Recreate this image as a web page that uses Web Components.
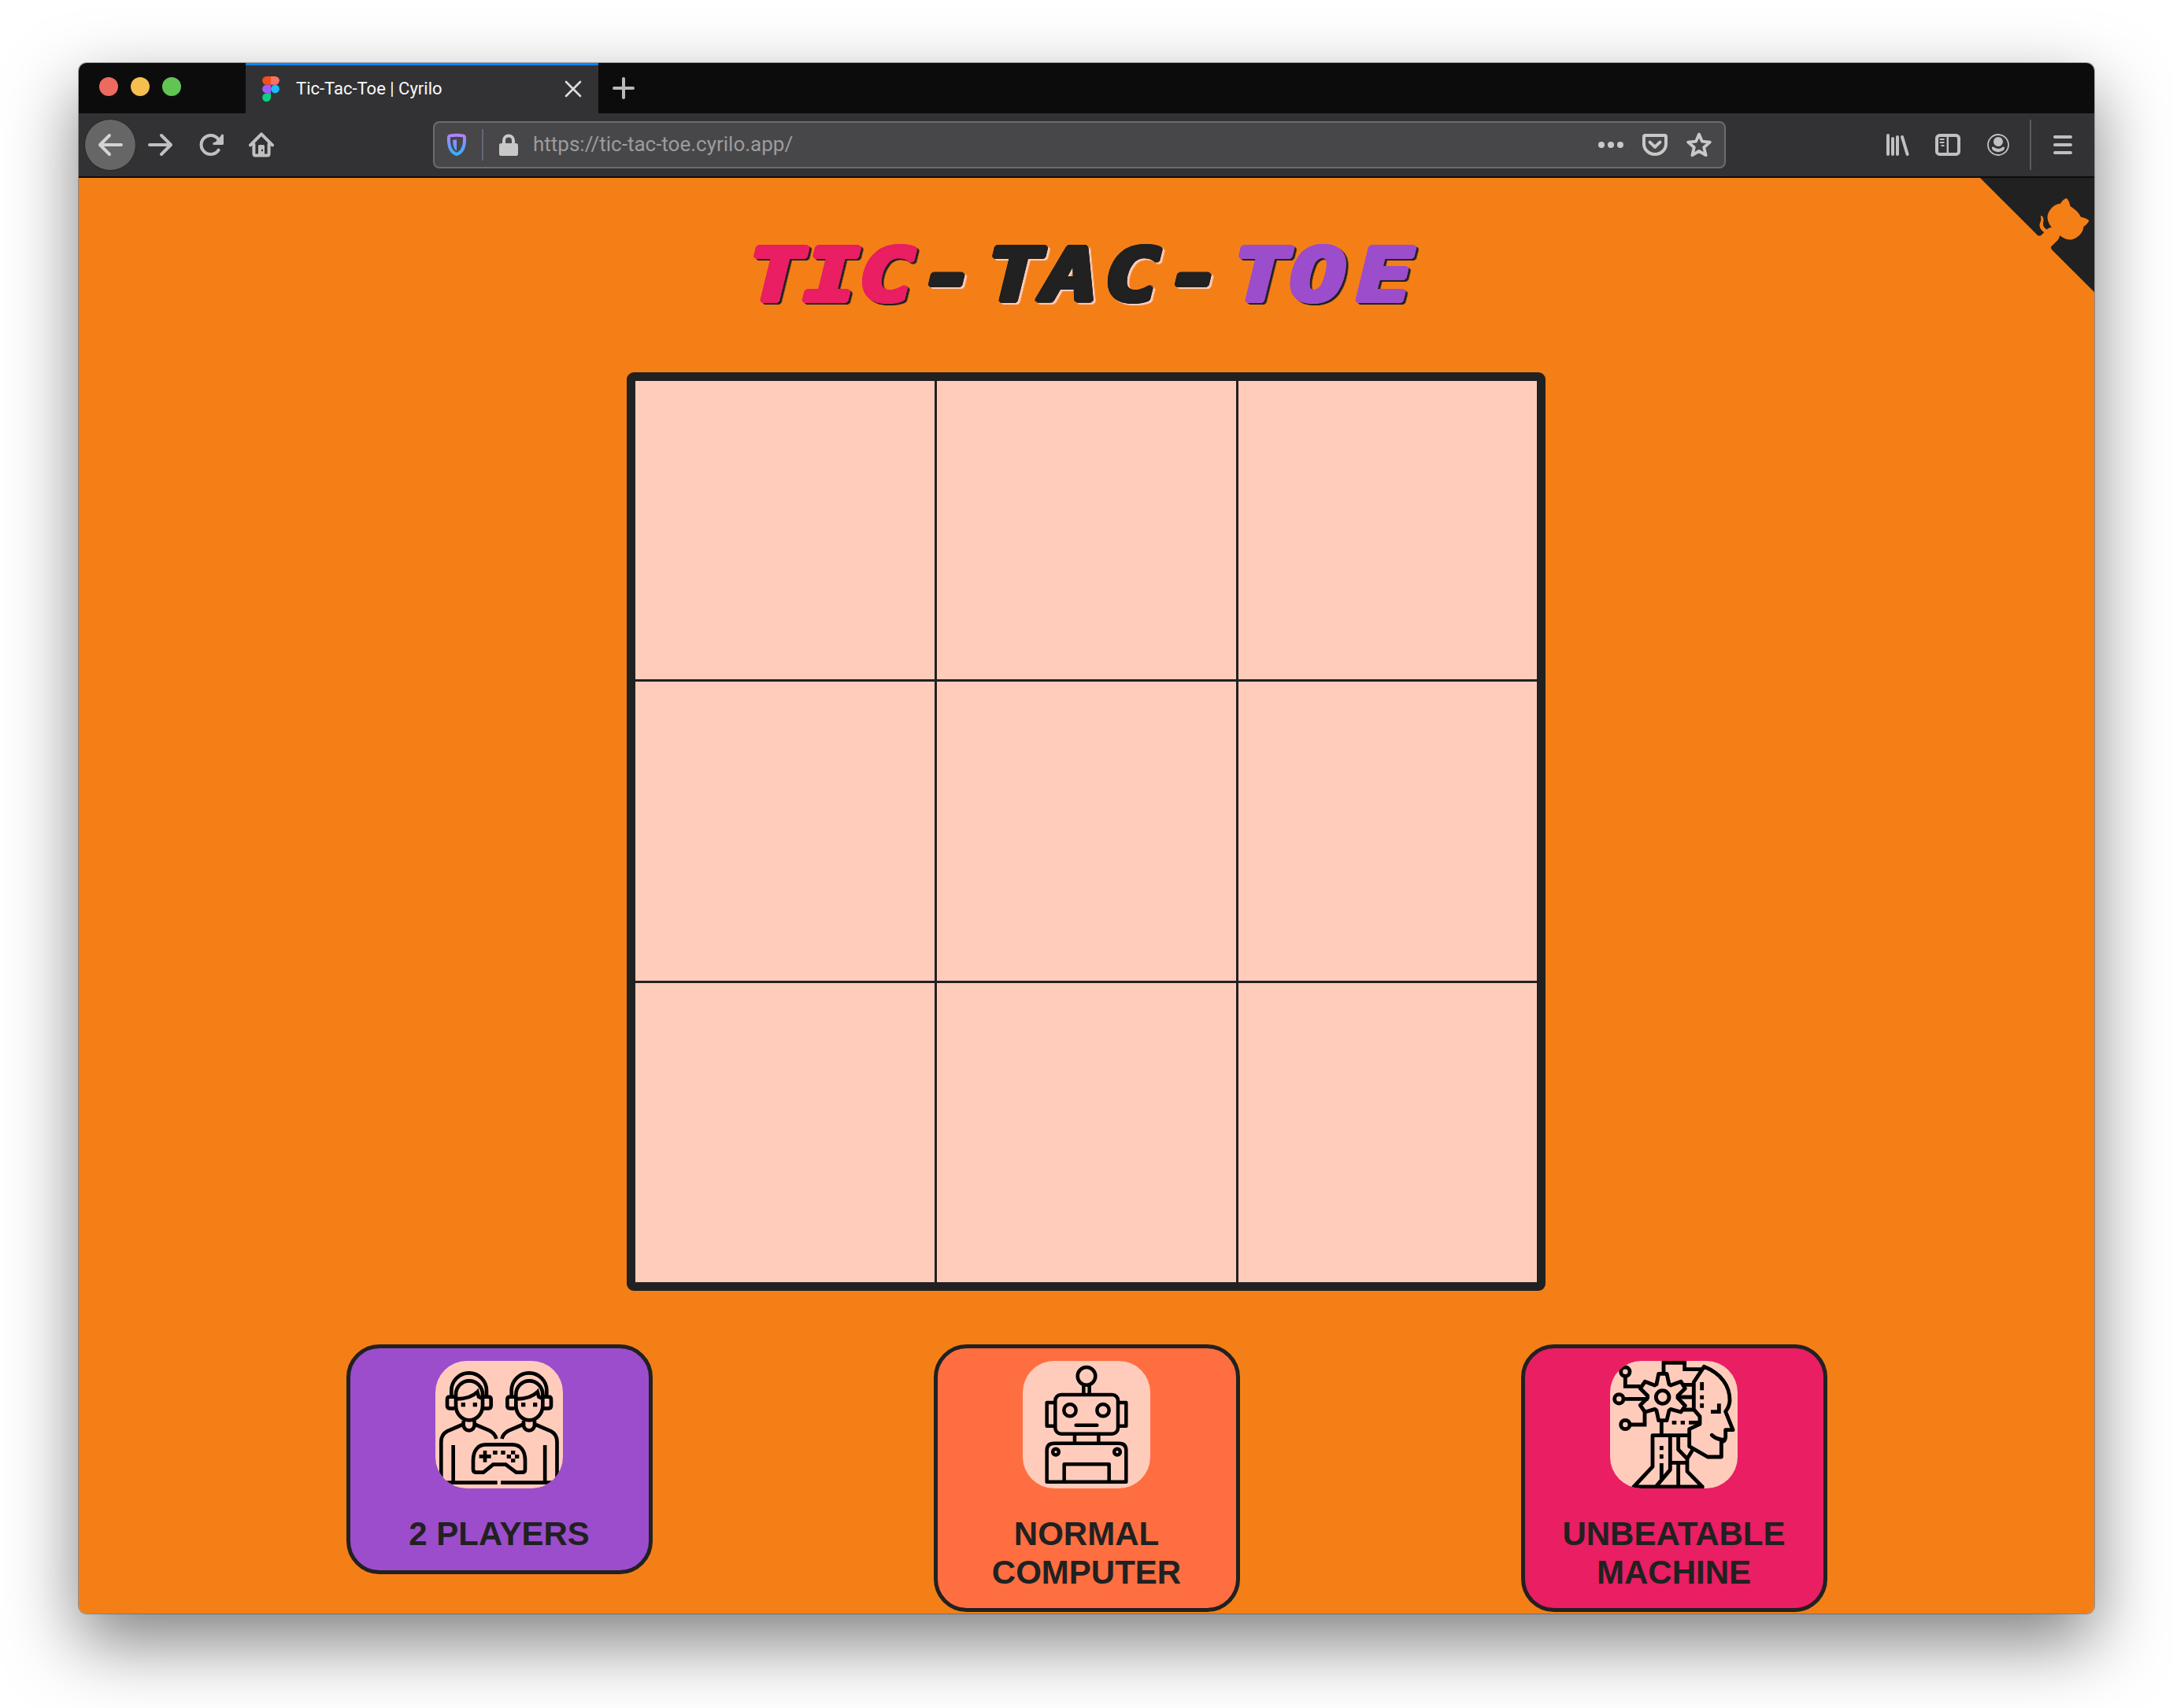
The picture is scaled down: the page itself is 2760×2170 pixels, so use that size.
<!DOCTYPE html>
<html lang="en">
<head>
<meta charset="utf-8">
<title>Tic-Tac-Toe | Cyrilo</title>
<style>
html,body{margin:0;background:#fff}
body{width:2760px;height:2170px;overflow:hidden;font-family:"Liberation Sans",Arial,sans-serif}
</style>
</head>
<body>
<browser-window>
  <tab-strip slot="chrome">Tic-Tac-Toe | Cyrilo</tab-strip>
  <nav-toolbar slot="chrome">https://tic-tac-toe.cyrilo.app/</nav-toolbar>
  <game-page></game-page>
</browser-window>

<template id="t-window">
<style>
:host{display:block;box-sizing:border-box;padding:80px 100px 120px}
.win{width:2560px;height:1970px;border-radius:10px;box-shadow:0 0 0 1px rgba(0,0,0,.28),0 36px 90px rgba(0,0,0,.5)}
.clip{display:flex;flex-direction:column;height:100%;border-radius:10px;overflow:hidden;background:#f57f17}
</style>
<div class="win"><div class="clip"><slot name="chrome"></slot><slot></slot></div></div>
</template>

<template id="t-tabs">
<style>
:host{display:flex;height:64px;background:#0c0c0d;flex:none}
.lights{display:flex;gap:16px;width:186px;padding:18px 0 0 26px}
.lights i{width:24px;height:24px;border-radius:50%}
.tab{box-sizing:border-box;width:448px;height:64px;background:#323234;border-top:3px solid #0a84ff;display:flex;align-items:center;padding:0 21px 0 20px}
.title{flex:1;margin-left:20px;font:22px/30px Roboto,sans-serif;color:#f9f9fa;padding-bottom:1px;white-space:nowrap}
svg{display:block;flex:none}
.fav{margin-top:0;margin-bottom:1px}
.plus{margin:18px 0 0 18px}
</style>
<div class="lights"><i style="background:#ec6a5e"></i><i style="background:#f5bf4f"></i><i style="background:#61c554"></i></div>
<div class="tab">
 <svg class="fav" width="24" height="34" viewBox="-1 -1 24 34"><path d="M5.5 0H11v10.700H5.500a5.350 5.350 0 0 1 0-10.700z" fill="#f24e1e"/><path d="M11 0h5.500a5.350 5.350 0 0 1 0 10.700H11z" fill="#ff7262"/><path d="M5.500 10.700H11v10.700H5.500a5.350 5.350 0 0 1 0-10.700z" fill="#a259ff"/><circle cx="16.500" cy="16" r="5.400" fill="#1abcfe"/><path d="M5.500 21.400H11v5.300a5.400 5.400 0 1 1-5.500-5.300z" fill="#0acf83"/></svg>
 <div class="title"><slot></slot></div>
 <svg width="22" height="22" viewBox="0 0 22 22" style="margin-bottom:1px"><path d="M2 2l18 18M20 2L2 20" stroke="#dcdcdc" stroke-width="2.600" stroke-linecap="round"/></svg>
</div>
<svg class="plus" width="28" height="28" viewBox="0 0 28 28"><path d="M14 2v24M2 14h24" stroke="#b8b8b8" stroke-width="4" stroke-linecap="round"/></svg>
</template>

<template id="t-nav">
<style>
:host{display:flex;align-items:center;box-sizing:border-box;height:82px;background:#323234;border-bottom:2px solid #0c0c0d;flex:none;color:#c0c0c1}
svg{display:block;flex:none;fill:none;stroke:currentColor;stroke-width:2;stroke-linecap:round;stroke-linejoin:round}
.nav{display:flex;align-items:center;width:450px;box-sizing:border-box;padding-left:7px;gap:32px}
.back{width:64px;height:64px;border-radius:50%;background:#666667;border:1px solid #262627;display:flex;align-items:center;justify-content:center;margin-right:-17px;color:#d4d4d4}
.url{box-sizing:border-box;width:1642px;height:60px;border:2px solid #6c6c6e;border-radius:8px;background:#474749;display:flex;align-items:center;padding:0 16px 0 12px;color:#c8c8c8}
.sep{width:2px;height:40px;background:#63667a}
.txt{flex:1;font:26px/34px Roboto,sans-serif;color:#9c9c9d;margin-left:15px;letter-spacing:0;padding-bottom:2px}
.acts{display:flex;gap:24px}
.right{display:flex;align-items:center;flex:1;padding-left:202px}
.bar{width:2px;height:64px;background:#5b5b5d}
</style>
<div class="nav">
 <div class="back"><svg width="32" height="32" viewBox="0 0 16 16"><path d="M15 8H1.500M7.500 2L1.500 8l6 6"/></svg></div>
 <svg width="32" height="32" viewBox="0 0 16 16"><path d="M1 8h13.500M8.500 2l6 6-6 6"/></svg>
 <svg width="32" height="32" viewBox="0 0 16 16"><path d="M12.800 11.300A6 6 0 1 1 12.600 4.400" /><path d="M15 1.500V8H9.200z" fill="currentColor" stroke="none"/><path d="M15.200 2v5.200h-5.200" stroke-width="1.600"/></svg>
 <svg width="32" height="32" viewBox="0 0 16 16"><path d="M1 8.200L8 1.200l7 7M3.200 7.500v6.300a1 1 0 0 0 1 1h7.600a1 1 0 0 0 1-1V7.500"/><path fill="currentColor" stroke="none" fill-rule="evenodd" d="M6.800 8h2.400a.8.800 0 0 1 .8.800V14H6V8.800A.8.800 0 0 1 6.800 8zM8 10.900v1.200h1v-1.200z"/></svg>
</div>
<div class="url">
 <svg width="32" height="32" viewBox="0 0 16 16"><defs><linearGradient id="sh" x1="0" y1="0" x2="0" y2="16" gradientUnits="userSpaceOnUse"><stop offset=".1" stop-color="#b580ff"/><stop offset=".9" stop-color="#2fb1ff"/></linearGradient></defs><path stroke="url(#sh)" d="M3 3Q3.100 2.300 3.800 2.200 8 1.500 12.200 2.200 12.900 2.300 13 3C13.300 8.500 12.300 12.500 8 14 3.700 12.500 2.700 8.500 3 3z"/><path d="M8 4.600V11.700C6 10.500 5.600 8 5.600 5z" fill="url(#sh)" stroke="none"/></svg>
 <div class="sep" style="margin:0 16px 0 16px"></div>
 <svg width="32" height="32" viewBox="0 0 16 16"><path d="M5 8V5.200a3 3 0 0 1 6 0V8"/><rect x="2" y="7" width="12" height="8" rx="1.400" fill="currentColor" stroke="none"/></svg>
 <div class="txt"><slot></slot></div>
 <div class="acts">
 <svg width="32" height="32" viewBox="0 0 16 16"><g fill="currentColor" stroke="none"><circle cx="2" cy="8" r="2"/><circle cx="8" cy="8" r="2"/><circle cx="14" cy="8" r="2"/></g></svg>
 <svg width="32" height="32" viewBox="0 0 16 16"><path d="M1.900 2H14.100Q15 2 15 3V7.200C15 11 12 14 8 14S1 11 1 7.200V3Q1 2 1.900 2zM4.800 6.300L8 9.400l3.200-3.100"/></svg>
 <svg width="32" height="32" viewBox="0 0 16 16"><path stroke-width="1.900" d="M8 1.300l1.900 4.500 5 .5-3.800 3.300 1.200 5L8 12l-4.300 2.600 1.200-5L1.100 6.300l5-.5z"/></svg>
 </div>
</div>
<div class="right">
 <svg width="32" height="32" viewBox="0 0 16 16" style="margin-right:32px"><path d="M2 2v12M5 4v10M8 3v11M11 3l3.300 11" /></svg>
 <svg width="32" height="32" viewBox="0 0 16 16" style="margin-right:32px"><rect x="1" y="2" width="14" height="12" rx="1.800"/><path d="M7.900 2v12" stroke-width="1.200"/><path d="M3.200 4.500h2.200M3.200 6.500h2.200M4.100 8.500h1.300" stroke-width=".9"/></svg>
 <svg width="32" height="32" viewBox="0 0 16 16" style="margin-right:24px"><circle cx="8" cy="8" r="6.500" stroke-width=".9"/><g fill="currentColor" stroke="none"><circle cx="8" cy="6" r="3"/><path d="M4 9.500Q5 9 5.700 9.800 8 11.200 10.300 9.800 11 9 12 9.500 12.300 12 8 12.600 3.700 12 4 9.500z"/></g></svg>
 <div class="bar"></div>
 <svg width="32" height="32" viewBox="0 0 16 16" style="margin-left:24px"><path d="M3 3h10M3 8h10M3 13h10"/></svg>
</div>
</template>

<template id="t-page">
<style>
:host{display:flex;flex-direction:column;flex:1;position:relative;background:#f57f17;min-height:0}
github-corner{position:absolute;top:0;right:-15px}
header{height:247px;flex:none;display:flex;justify-content:center;align-items:center}
game-board{align-self:center;margin-right:1px}
.modes{display:flex;justify-content:space-between;align-items:flex-start;padding:68px 339.500px 0}
</style>
<header><game-title></game-title></header>
<game-board></game-board>
<div class="modes">
 <mode-card icon="players" style="--bg:#9c4dcc">2 PLAYERS</mode-card>
 <mode-card icon="robot" style="--bg:#ff6e40">NORMAL<br>COMPUTER</mode-card>
 <mode-card icon="machine" style="--bg:#e91e63">UNBEATABLE<br>MACHINE</mode-card>
</div>
<github-corner></github-corner>
</template>

<template id="t-title">
<style>
:host{display:block}
h1{margin:0;font:italic bold 92px/110px "DejaVu Sans Mono",monospace;white-space:nowrap;transform:translate(-7px,1px) scaleX(1.28)}
.w{display:inline-block;color:var(--c);filter:drop-shadow(2px 2px 0 var(--s));
 text-shadow:3px 0 var(--c),2.800px 1.100px var(--c),2.100px 2.100px var(--c),1.100px 2.800px var(--c),0 3px var(--c),-1.100px 2.800px var(--c),-2.100px 2.100px var(--c),-2.800px 1.100px var(--c),-3px 0 var(--c),-2.800px -1.100px var(--c),-2.100px -2.100px var(--c),-1.100px -2.800px var(--c),0 -3px var(--c),1.100px -2.800px var(--c),2.100px -2.100px var(--c),2.800px -1.100px var(--c)}
</style>
<h1><span class="w" style="--c:#e91e63;--s:#212121"><span style="letter-spacing:-.5px">TI</span><span style="letter-spacing:5px">C</span></span><span class="w" style="--c:#212121;--s:#ffccbc"><span style="letter-spacing:11px">-</span><span style="letter-spacing:0">T</span><span style="letter-spacing:6px">A</span><span style="letter-spacing:6px">C</span><span style="letter-spacing:11px">-</span></span><span class="w" style="--c:#9c4dcc;--s:#212121"><span style="letter-spacing:1px">T</span><span style="letter-spacing:11px">O</span>E</span></h1>
</template>

<template id="t-board">
<style>
:host{display:grid;box-sizing:border-box;width:1167px;height:1167px;border:11px solid #212121;border-radius:9px;background:#212121;grid-template-columns:380px 380px 379px;grid-template-rows:379px 380px 380px;gap:3px}
i{background:#ffccbc}
</style>
<i></i><i></i><i></i><i></i><i></i><i></i><i></i><i></i><i></i>
</template>

<template id="t-card">
<style>
:host{display:flex;flex-direction:column;align-items:center;box-sizing:border-box;width:389px;border:5px solid #212121;border-radius:42px;background:var(--bg);padding:16px 0 21px;color:#212121}
.tile{width:162px;height:162px;border-radius:40px;background:#ffccbc;overflow:hidden}
svg{display:block;width:162px;height:162px;fill:none;stroke:#000;stroke-width:14}
.label{margin-top:34px;font-weight:bold;font-size:42px;line-height:48.700px;text-align:center;white-space:nowrap}
</style>
<div class="tile"></div>
<div class="label"><slot></slot></div>
</template>

<template id="t-corner">
<style>:host{display:block;width:160px;height:160px}svg{display:block}</style>
<svg width="160" height="160" viewBox="0 0 250 250"><path fill="#212121" d="M0,0 L115,115 L130,115 L142,142 L250,250 L250,0 Z"/><path fill="#f57f17" d="M128.3,109.0 C113.8,99.7 119.0,89.6 119.0,89.6 C122.0,82.7 120.5,78.6 120.5,78.6 C119.2,72.0 123.4,76.3 123.4,76.3 C127.3,80.9 125.5,87.3 125.5,87.3 C122.9,97.6 130.6,101.9 134.4,103.2"/><path fill="#f57f17" d="M115.0,115.0 C114.9,115.1 118.7,116.5 119.8,115.4 L133.7,101.6 C136.9,99.2 139.9,98.4 142.2,98.6 C133.8,88.0 127.5,74.4 143.8,58.0 C148.5,53.4 154.0,51.2 159.7,51.0 C160.3,49.4 163.2,43.6 171.4,40.1 C171.4,40.1 176.1,42.5 178.8,56.2 C183.1,58.6 187.2,61.8 190.9,65.4 C194.5,69.0 197.7,73.2 200.1,77.6 C213.8,80.2 216.3,84.9 216.3,84.9 C212.7,93.1 206.9,96.0 205.4,96.6 C205.1,102.4 203.0,107.8 198.3,112.5 C181.9,128.9 168.3,122.5 157.7,114.1 C157.9,116.9 156.7,120.9 152.7,124.9 L141.0,136.5 C139.8,137.7 141.6,141.9 141.8,141.8 Z"/></svg>
</template>

<template id="i-players">
<svg viewBox="370 87 486 486">
<defs>
<g id="head"><path d="M431 222V200a67 67 0 0 1 134 0v22M448 215a51 52 0 0 1 102 0v42a51 56 0 0 1-102 0zM446 224h-21q-10 0-10 10v24q0 10 10 10h17M552 224h20q10 0 10 10v24q0 10-10 10h-17M450 232C490 232 515 220 530 205L535 224 552 232M477 315v16a20 20 0 0 0 42 0v-16"/><path fill="#000" stroke="none" d="M468 246h16v16h-16zM513 246h16v16h-16z"/></g>
<g id="torso"><path d="M473 330L415 355Q392 367 392 395V540M523 330L575 352Q597 362 602 384M438 408V548M400 551H606"/></g>
</defs>
<use href="#head"/><use href="#head" x="229"/><use href="#torso"/><use href="#torso" transform="translate(1225.500 0) scale(-1 1)"/>
<path d="M562 406H663C695 406 712 430 712 466V500q0 12-12 12H678L638 482H590L553 512H527q-13 0-13-12V466C514 430 532 406 562 406z"/>
<path d="M559 429v44M537 451h45"/>
<path fill="#000" stroke="none" d="M589 429h17v15h-17zM620 429h16v15h-16zM658 429h16v14h-16zM658 460h16v14h-16zM642 444h16v15h-16zM673 444h16v15h-16z"/>
</svg></template>

<template id="i-robot">
<svg viewBox="357 87 486 486"><g stroke-width="13.500"><circle cx="600" cy="145" r="34"/><path d="M589 180v32M611 180v32M478 246H449v89H478M722 246H751v89H722M555 368v30M646 368v30M449 548V428Q449 401 477 401H723Q751 401 751 428V548zM515 545V481H686v64" stroke-linejoin="round"/><rect x="481" y="216" width="239" height="149" rx="22"/><circle cx="537" cy="275" r="23"/><circle cx="663" cy="275" r="23"/><path d="M560 332h80" stroke-linecap="round"/><circle cx="483" cy="434" r="11.500"/><circle cx="717" cy="434" r="11.500"/></g></svg></template>

<template id="i-machine">
<svg viewBox="375 87 486 486"><g stroke-width="14.500">
<circle cx="433" cy="128" r="17"/><circle cx="409" cy="232" r="17"/><circle cx="433" cy="330" r="17"/>
<path d="M433 146v38H490M428 232H520M452 330H507V282"/>
<path stroke-linejoin="round" d="M560 136H591L600 176 606 180 645 166 661 192 633 220V228L661 258 645 282 606 271 600 276 591 314H560L552 276 545 271 508 282 490 256 518 228V220L490 192 508 166 545 180 552 176z"/>
<circle cx="575" cy="225" r="25"/>
<path d="M579 135V94H659V119H724M655 178H692M632 225H692M648 273H694M675 322H717M571 316V368"/>
<path stroke-linejoin="round" stroke-linecap="round" d="M733 109L694 168V272L717 299V328L677 347V413L747 453H799V397M733 109C798 135 832 182 831 240Q829 262 815 280L843 350H815V378Q812 396 799 394M763 370Q780 387 808 388"/>
<path d="M790 250V281H759M725 168v31M725 218v15M725 249v17M611 322h17M644 322h16M571 411v16M571 443v17M571 477V538"/>
<path stroke-linejoin="round" d="M677 371H537V490L465 567H727L669 508V460L635 425V372M669 460L690 425M604 372V502L550 566M604 475H669M635 475V566"/>
</g></svg></template>

<script>
function define(name, tpl, setup) {
  customElements.define(name, class extends HTMLElement {
    constructor() {
      super();
      this.attachShadow({ mode: 'open' }).append(document.getElementById(tpl).content.cloneNode(true));
    }
    connectedCallback() { if (setup) setup(this); }
  });
}
define('github-corner', 't-corner');
define('mode-card', 't-card', el => {
  const tile = el.shadowRoot.querySelector('.tile');
  tile.replaceChildren(document.getElementById('i-' + el.getAttribute('icon')).content.cloneNode(true));
});
define('game-board', 't-board');
define('game-title', 't-title');
define('game-page', 't-page');
define('tab-strip', 't-tabs');
define('nav-toolbar', 't-nav');
define('browser-window', 't-window');
</script>
</body>
</html>
